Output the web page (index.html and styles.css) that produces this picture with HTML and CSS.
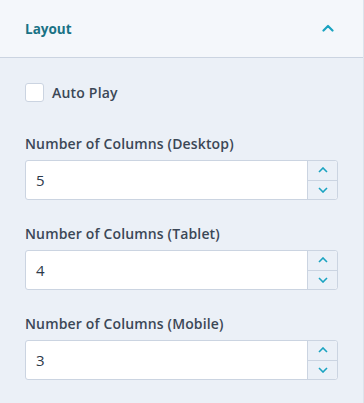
FILE: index.html
```html
<!DOCTYPE html>
<html>
<head>
<meta charset="utf-8">
<link rel="stylesheet" href="styles.css">
</head>
<body>
<div class="panel">
  <div class="header">
    <span class="title">Layout</span>
    <svg class="chev" width="12" height="8" viewBox="0 0 12 8"><path d="M1.5 6.5 L6 2 L10.5 6.5" fill="none" stroke="#1aa3c1" stroke-width="2.2" stroke-linecap="round" stroke-linejoin="round"/></svg>
  </div>
  <div class="body">
    <label class="check"><span class="box"></span><span class="check-label">Auto Play</span></label>
    <div class="field">
      <div class="label">Number of Columns (Desktop)</div>
      <div class="input"><span class="value">5</span><div class="spin"><span class="btn"><svg width="10" height="6" viewBox="0 0 10 6"><path d="M1 5 L5 1 L9 5" fill="none" stroke="#1aa3c1" stroke-width="1.6"/></svg></span><span class="btn"><svg width="10" height="6" viewBox="0 0 10 6"><path d="M1 1 L5 5 L9 1" fill="none" stroke="#1aa3c1" stroke-width="1.6"/></svg></span></div></div>
    </div>
    <div class="field">
      <div class="label">Number of Columns (Tablet)</div>
      <div class="input"><span class="value">4</span><div class="spin"><span class="btn"><svg width="10" height="6" viewBox="0 0 10 6"><path d="M1 5 L5 1 L9 5" fill="none" stroke="#1aa3c1" stroke-width="1.6"/></svg></span><span class="btn"><svg width="10" height="6" viewBox="0 0 10 6"><path d="M1 1 L5 5 L9 1" fill="none" stroke="#1aa3c1" stroke-width="1.6"/></svg></span></div></div>
    </div>
    <div class="field">
      <div class="label">Number of Columns (Mobile)</div>
      <div class="input"><span class="value">3</span><div class="spin"><span class="btn"><svg width="10" height="6" viewBox="0 0 10 6"><path d="M1 5 L5 1 L9 5" fill="none" stroke="#1aa3c1" stroke-width="1.6"/></svg></span><span class="btn"><svg width="10" height="6" viewBox="0 0 10 6"><path d="M1 1 L5 5 L9 1" fill="none" stroke="#1aa3c1" stroke-width="1.6"/></svg></span></div></div>
    </div>
  </div>
</div>
</body>
</html>
```
FILE: styles.css
```css
html, body { margin: 0; padding: 0; }
body { font-family: "Open Sans", "Noto Sans", sans-serif; background: #ebf0f7; }
.panel { width: 363px; height: 403px; border-right: 1px solid #dde3ec; background: #ebf0f7; }
.header { height: 58px; border-bottom: 1px solid #cbd4e1; background: #f4f7fb; display: flex; align-items: center; justify-content: space-between; padding: 0 29px 0 25px; box-sizing: border-box; }
.title { font-size: 13.5px; font-weight: 700; color: #197285; }
.chev { display: block; margin-top: -1px; }
.body { padding: 25px 25px 0 25px; }
.check { display: flex; align-items: center; gap: 8px; height: 19px; }
.box { width: 17px; height: 17px; border: 1px solid #cbd4e1; border-radius: 3px; background: #fff; }
.check-label { font-size: 14px; font-weight: 600; color: #3b4756; letter-spacing: 0.2px; }
.field { margin-top: 33px; }
.field + .field { margin-top: 25px; }
.label { font-size: 14px; font-weight: 600; color: #3b4756; line-height: 18px; letter-spacing: 0.15px; }
.input { margin-top: 7px; width: 313px; height: 40px; box-sizing: border-box; border: 1px solid #cbd4e1; border-radius: 3px; background: #fff; display: flex; align-items: stretch; }
.value { flex: 1; padding-left: 10px; display: flex; align-items: center; font-size: 15px; color: #2d3a4a; }
.spin { width: 29px; border-left: 1px solid #cbd4e1; background: #ebf0f7; display: flex; flex-direction: column; border-radius: 0 3px 3px 0; }
.btn { flex: 1; display: flex; align-items: center; justify-content: center; }
.btn + .btn { border-top: 1px solid #cbd4e1; }
.btn svg { display: block; }
```
